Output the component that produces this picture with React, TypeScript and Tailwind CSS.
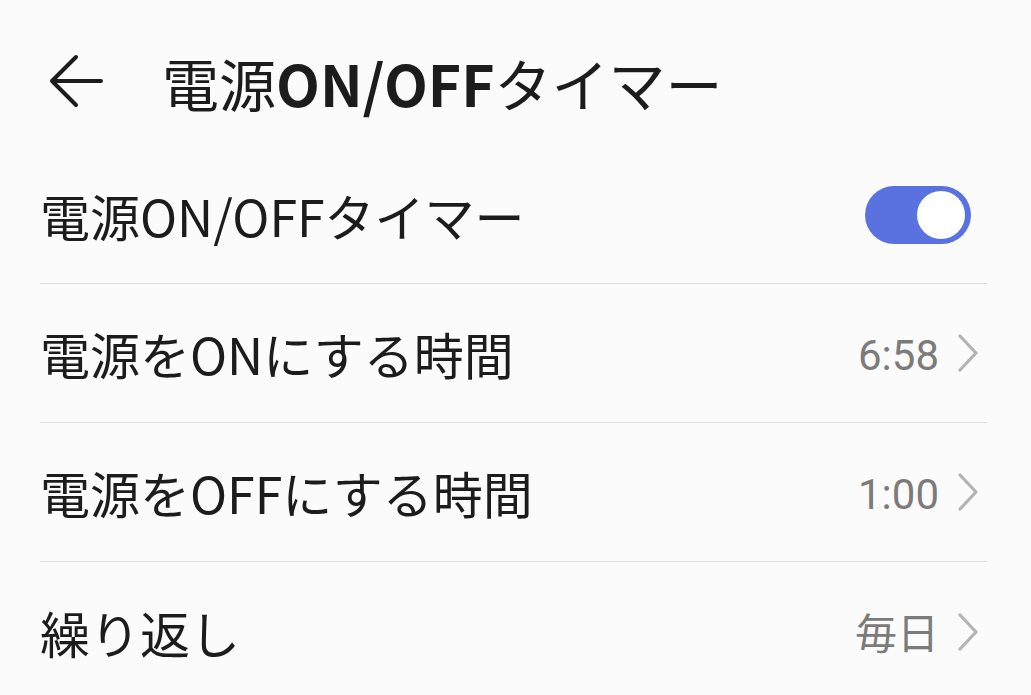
import React from "react";

const jp = { fontFamily: '"Noto Sans CJK JP", "Noto Sans", sans-serif' };
const val = { fontFamily: 'Roboto, "Noto Sans CJK JP", sans-serif' };

function Chevron() {
  return (
    <svg width="22" height="38" viewBox="0 0 22 38" className="ml-[18px]">
      <path d="M3 2 L19 19 L3 36" fill="none" stroke="#b3b3b3" strokeWidth="3.2" strokeLinecap="round" strokeLinejoin="round" />
    </svg>
  );
}

function Row({ label, value, last }: { label: string; value?: string; last?: boolean }) {
  return (
    <div className={`flex h-[139px] items-center justify-between ${last ? "" : "border-b border-[#dedede]"}`}>
      <span className="text-[50px] leading-none text-[#1c1c1c]" style={jp}>{label}</span>
      {value !== undefined && (
        <div className="flex items-center pr-[8px]">
          <span className="pt-[6px] text-[42px] leading-none text-[#7b7b7b]" style={val}>{value}</span>
          <Chevron />
        </div>
      )}
    </div>
  );
}

export default function App() {
  return (
    <div className="w-[1031px] h-[695px] overflow-hidden bg-[#fbfbfb]" style={jp}>
      <div className="flex h-[147px] items-start pt-[54px] pl-[48px]">
        <svg width="56" height="56" viewBox="0 0 56 56" className="shrink-0">
          <path d="M53 27 H4 M28 3 L4 27 L28 51" fill="none" stroke="#1c1c1c" strokeWidth="4" strokeLinecap="round" strokeLinejoin="round" />
        </svg>
        <span className="ml-[58px] text-[57px] leading-[56px] text-[#1c1c1c]">
          電源<span className="font-bold">ON/OFF</span>タイマー
        </span>
      </div>
      <div className="ml-[40px] mr-[44px]">
        <div className="flex h-[137px] items-center justify-between border-b border-[#dedede]">
          <span className="text-[50px] leading-none text-[#1c1c1c]">電源ON/OFFタイマー</span>
          <div className="mr-[16px] flex h-[58px] w-[106px] items-center justify-end rounded-full bg-[#5a72e0] pr-[6px]">
            <div className="h-[48px] w-[48px] rounded-full bg-white" />
          </div>
        </div>
        <Row label="電源をONにする時間" value="6:58" />
        <Row label="電源をOFFにする時間" value="1:00" />
        <Row label="繰り返し" value="毎日" last />
      </div>
    </div>
  );
}
